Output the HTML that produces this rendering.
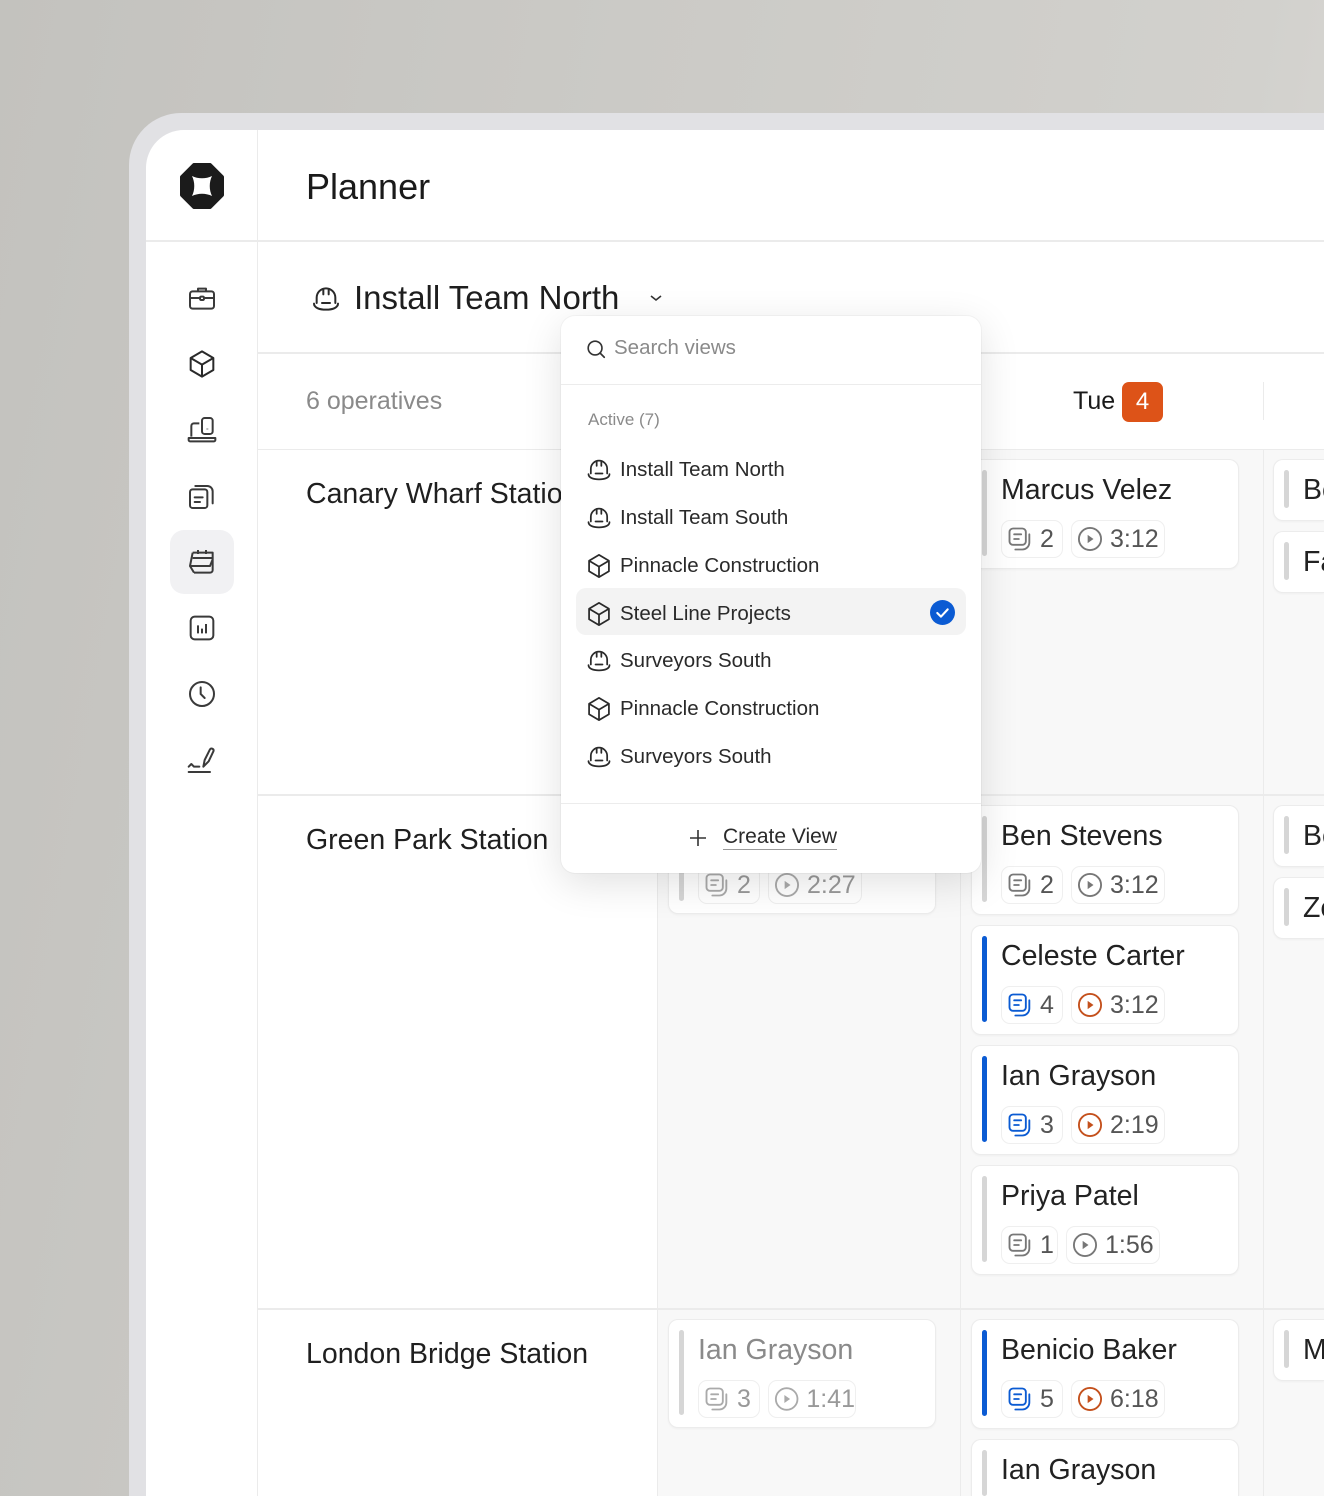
<!DOCTYPE html>
<html><head><meta charset="utf-8">
<style>
*{box-sizing:border-box;margin:0;padding:0}
html,body{width:1324px;height:1496px;overflow:hidden}
body{position:relative;font-family:"Liberation Sans",sans-serif;
background:linear-gradient(100deg,#c3c2be 0%,#cbcac6 40%,#d2d1cd 80%,#dcdbd8 100%);}
#wrap{position:absolute;left:0;top:0;width:1324px;height:1496px;overflow:hidden}
.abs{position:absolute}
.frame{left:129px;top:113px;width:1195px;height:1383px;background:#e1e1e4;border-radius:52px 0 0 0}
.inner{left:146px;top:130px;width:1178px;height:1366px;background:#fff;border-radius:38px 0 0 0;overflow:hidden}
.grid{background:#f8f8f8}
.line{background:#ebebeb}
.t{position:absolute;white-space:nowrap;color:#1f1f1f}
.card{position:absolute;background:#fff;border:1px solid #ececec;border-radius:10px;box-shadow:0 1px 2px rgba(0,0,0,.04)}
.card .bar{position:absolute;left:10px;top:10px;bottom:12px;width:5px;border-radius:3px;background:#d6d6d6}
.card .bar.b{background:#0b5bd3}
.card .nm{position:absolute;left:29px;top:14px;font-size:28.5px;color:#222;white-space:nowrap}
.card.f .nm{color:#8a8a8a}
.chip{position:absolute;top:60px;height:38px;border:1px solid #efefef;border-radius:9px;background:#fff;font-size:25px;color:#555;display:flex;align-items:center;padding-left:4px}
.card.f .chip{color:#999}
.chip svg{margin-right:6px}
.dd{left:561px;top:316px;width:420px;height:557px;background:#fff;border-radius:14px;box-shadow:0 10px 40px rgba(0,0,0,.12),0 0 0 1px rgba(0,0,0,.03)}
.it{position:absolute;left:24px;font-size:20.5px;color:#2a2a2a;display:flex;align-items:center;white-space:nowrap}
.it svg{margin-right:7px}
</style></head><body>
<svg width="0" height="0" style="position:absolute">
<defs>
<symbol id="doc" viewBox="0 0 24 24" fill="none" stroke-width="1.6" stroke-linecap="round" stroke-linejoin="round"><rect x="3" y="3" width="14" height="14" rx="3"/><path d="M7 8h6M7 12h4"/><path d="M20 8v7a6 6 0 0 1-6 6H8"/></symbol>
<symbol id="play" viewBox="0 0 24 24" fill="none" stroke-width="1.6"><circle cx="12" cy="12" r="9.5"/><path d="M10 8.5l5 3.5-5 3.5z" fill="currentColor" stroke="none"/></symbol>
<symbol id="helm" viewBox="0 0 24 24" fill="none" stroke="#2a2a2a" stroke-width="1.5" stroke-linecap="round" stroke-linejoin="round"><path d="M5 15V11a7 7 0 0 1 14 0v4"/><path d="M10 4.5v4M14 4.5v4"/><path d="M3 15.5c0 3 4 4.5 9 4.5s9-1.5 9-4.5"/><path d="M9 15h6"/></symbol>
<symbol id="cube" viewBox="0 0 24 24" fill="none" stroke="#2a2a2a" stroke-width="1.5" stroke-linejoin="round"><path d="M12 2.5l8.5 5v9L12 21.5 3.5 16.5v-9z"/><path d="M3.5 7.5L12 12.5l8.5-5M12 12.5v9"/></symbol>
</defs></svg>
<div id="wrap">
<div class="abs frame"></div>
<div class="abs inner">
  <div class="abs grid" style="left:511px;top:319px;width:667px;height:1047px"></div>
  <div class="abs line" style="left:111px;top:0;width:1px;height:1366px"></div>
  <div class="abs line" style="left:0;top:110px;width:1178px;height:2px"></div>
  <div class="abs line" style="left:112px;top:222px;width:1066px;height:2px"></div>
  <div class="abs" style="left:112px;top:224px;width:1066px;height:95px;background:#fff"></div>
  <div class="abs line" style="left:112px;top:319px;width:1066px;height:1px"></div>
  <div class="abs line" style="left:112px;top:664px;width:1066px;height:2px"></div>
  <div class="abs line" style="left:112px;top:1178px;width:1066px;height:2px"></div>
  <div class="abs line" style="left:511px;top:319px;width:1px;height:1047px"></div>
  <div class="abs line" style="left:814px;top:319px;width:1px;height:1047px"></div>
  <div class="abs line" style="left:1117px;top:319px;width:1px;height:1047px"></div>
  <div class="abs line" style="left:1117px;top:252px;width:1px;height:38px"></div>
</div>

<svg class="abs" style="left:179px;top:163px" width="46" height="46" viewBox="0 0 46 46">
<path d="M15 2h16l12 12v18L31 44H15L3 32V14z" fill="#1b1b1b" stroke="#1b1b1b" stroke-width="4" stroke-linejoin="round"/>
<path d="M13 13c6 3 14 3 20 0c-3 6-3 14 0 20c-6-3-14-3-20 0c3-6 3-14 0-20z" fill="#fff"/>
</svg>

<div class="abs" style="left:170px;top:530px;width:64px;height:64px;background:#f1f1f3;border-radius:14px"></div>
<svg class="abs" style="left:186px;top:282px" width="32" height="32" viewBox="0 0 24 24" fill="none" stroke="#3a3a3a" stroke-width="1.5" stroke-linejoin="round"><rect x="3" y="7" width="18" height="13" rx="2"/><path d="M9 7V5h6v2M3 12h18"/><rect x="10.5" y="11" width="3" height="2.5" rx=".8" fill="#fff"/></svg>
<svg class="abs" style="left:186px;top:348px" width="32" height="32" viewBox="0 0 24 24"><use href="#cube" stroke="#3a3a3a"/></svg>
<svg class="abs" style="left:186px;top:414px" width="32" height="32" viewBox="0 0 24 24" fill="none" stroke="#3a3a3a" stroke-width="1.5" stroke-linejoin="round"><path d="M4 17V9a2 2 0 0 1 2-2h4"/><rect x="12" y="3" width="8" height="12" rx="2"/><path d="M16 11v.5"/><path d="M2 18h20v1.5a1 1 0 0 1-1 1H3a1 1 0 0 1-1-1z"/></svg>
<svg class="abs" style="left:186px;top:480px" width="32" height="32" viewBox="0 0 24 24" fill="none" stroke="#3a3a3a" stroke-width="1.5" stroke-linecap="round" stroke-linejoin="round"><rect x="3" y="7" width="13" height="14" rx="2"/><path d="M6.5 13h6M6.5 16.5h4"/><path d="M7 4.5h9a4 4 0 0 1 4 4v9"/></svg>
<svg class="abs" style="left:185px;top:546px" width="34" height="32" viewBox="0 0 24 24" fill="none" stroke="#3a3a3a" stroke-width="1.5" stroke-linejoin="round"><path d="M5 5h15v13a2 2 0 0 1-2 2H6"/><path d="M5 5L3 15h15l2-5"/><path d="M3 15l3 5M9 3v3M15 3v3M5 9h15"/></svg>
<svg class="abs" style="left:186px;top:612px" width="32" height="32" viewBox="0 0 24 24" fill="none" stroke="#3a3a3a" stroke-width="1.5"><rect x="3.5" y="3.5" width="17" height="17" rx="3"/><path d="M9 10v6M12 12.5v3.5M15 9v7"/></svg>
<svg class="abs" style="left:186px;top:678px" width="32" height="32" viewBox="0 0 24 24" fill="none" stroke="#3a3a3a" stroke-width="1.5" stroke-linecap="round"><circle cx="12" cy="12" r="9"/><path d="M11 7v5l3 3"/></svg>
<svg class="abs" style="left:186px;top:744px" width="32" height="32" viewBox="0 0 24 24" fill="none" stroke="#3a3a3a" stroke-width="1.5" stroke-linecap="round" stroke-linejoin="round"><path d="M2 21h16"/><path d="M2 17l2-2 2 2h4"/><path d="M13 17l1-5 4-8a1.5 1.5 0 0 1 2.6 1.4L17 13z"/></svg>

<div class="t" style="left:306px;top:166px;font-size:36px;color:#1a1a1a">Planner</div>
<svg class="abs" style="left:310px;top:283px" width="32" height="32" viewBox="0 0 24 24"><use href="#helm"/></svg>
<div class="t" style="left:354px;top:279px;font-size:33px;color:#1e1e1e">Install Team North</div>
<svg class="abs" style="left:648px;top:290px" width="16" height="16" viewBox="0 0 16 16" fill="none" stroke="#333" stroke-width="1.6"><path d="M3 6l5 4 5-4"/></svg>
<div class="t" style="left:306px;top:387px;font-size:25px;color:#8a8a8a">6 operatives</div>
<div class="t" style="left:1073px;top:387px;font-size:25px;color:#1a1a1a">Tue</div>
<div class="abs" style="left:1122px;top:382px;width:41px;height:40px;background:#dd5318;border-radius:7px;color:#fff;font-size:24px;text-align:center;line-height:40px">4</div>

<div class="t" style="left:306px;top:478px;font-size:28.5px">Canary Wharf Station</div>
<div class="t" style="left:306px;top:824px;font-size:28.5px">Green Park Station</div>
<div class="t" style="left:306px;top:1338px;font-size:28.5px">London Bridge Station</div>

<div class="card f" style="left:668px;top:805px;width:268px;height:109px"><div class="bar"></div>
 <div class="chip" style="left:29px;width:62px"><svg width="28" height="28" style="color:#aaa;stroke:#aaa"><use href="#doc"/></svg>2</div>
 <div class="chip" style="left:99px;width:94px"><svg width="28" height="28" style="color:#aaa;stroke:#aaa"><use href="#play"/></svg>2:27</div></div>
<div class="card f" style="left:668px;top:1319px;width:268px;height:109px"><div class="bar"></div><div class="nm">Ian Grayson</div>
 <div class="chip" style="left:29px;width:62px"><svg width="28" height="28" style="color:#aaa;stroke:#aaa"><use href="#doc"/></svg>3</div>
 <div class="chip" style="left:99px;width:88px"><svg width="28" height="28" style="color:#aaa;stroke:#aaa"><use href="#play"/></svg>1:41</div></div>

<div class="card" style="left:971px;top:459px;width:268px;height:110px"><div class="bar"></div><div class="nm">Marcus Velez</div>
 <div class="chip" style="left:29px;width:62px"><svg width="28" height="28" style="color:#777;stroke:#777"><use href="#doc"/></svg>2</div>
 <div class="chip" style="left:99px;width:94px"><svg width="28" height="28" style="color:#777;stroke:#777"><use href="#play"/></svg>3:12</div></div>
<div class="card" style="left:971px;top:805px;width:268px;height:110px"><div class="bar"></div><div class="nm">Ben Stevens</div>
 <div class="chip" style="left:29px;width:62px"><svg width="28" height="28" style="color:#777;stroke:#777"><use href="#doc"/></svg>2</div>
 <div class="chip" style="left:99px;width:94px"><svg width="28" height="28" style="color:#777;stroke:#777"><use href="#play"/></svg>3:12</div></div>
<div class="card" style="left:971px;top:925px;width:268px;height:110px"><div class="bar b"></div><div class="nm">Celeste Carter</div>
 <div class="chip" style="left:29px;width:62px"><svg width="28" height="28" style="color:#0b5bd3;stroke:#0b5bd3"><use href="#doc"/></svg>4</div>
 <div class="chip" style="left:99px;width:94px"><svg width="28" height="28" style="color:#c4501c;stroke:#c4501c"><use href="#play"/></svg>3:12</div></div>
<div class="card" style="left:971px;top:1045px;width:268px;height:110px"><div class="bar b"></div><div class="nm">Ian Grayson</div>
 <div class="chip" style="left:29px;width:62px"><svg width="28" height="28" style="color:#0b5bd3;stroke:#0b5bd3"><use href="#doc"/></svg>3</div>
 <div class="chip" style="left:99px;width:94px"><svg width="28" height="28" style="color:#c4501c;stroke:#c4501c"><use href="#play"/></svg>2:19</div></div>
<div class="card" style="left:971px;top:1165px;width:268px;height:110px"><div class="bar"></div><div class="nm">Priya Patel</div>
 <div class="chip" style="left:29px;width:57px"><svg width="28" height="28" style="color:#777;stroke:#777"><use href="#doc"/></svg>1</div>
 <div class="chip" style="left:94px;width:94px"><svg width="28" height="28" style="color:#777;stroke:#777"><use href="#play"/></svg>1:56</div></div>
<div class="card" style="left:971px;top:1319px;width:268px;height:110px"><div class="bar b"></div><div class="nm">Benicio Baker</div>
 <div class="chip" style="left:29px;width:62px"><svg width="28" height="28" style="color:#0b5bd3;stroke:#0b5bd3"><use href="#doc"/></svg>5</div>
 <div class="chip" style="left:99px;width:94px"><svg width="28" height="28" style="color:#c4501c;stroke:#c4501c"><use href="#play"/></svg>6:18</div></div>
<div class="card" style="left:971px;top:1439px;width:268px;height:57px;border-bottom:none;border-radius:10px 10px 0 0"><div class="bar" style="bottom:0"></div><div class="nm">Ian Grayson</div></div>

<div class="card" style="left:1273px;top:459px;width:51px;height:62px;border-right:none;border-radius:10px 0 0 10px"><div class="bar"></div><div class="nm" style="top:14px">Be</div></div>
<div class="card" style="left:1273px;top:531px;width:51px;height:62px;border-right:none;border-radius:10px 0 0 10px"><div class="bar"></div><div class="nm" style="top:14px">Fa</div></div>
<div class="card" style="left:1273px;top:805px;width:51px;height:62px;border-right:none;border-radius:10px 0 0 10px"><div class="bar"></div><div class="nm" style="top:14px">Be</div></div>
<div class="card" style="left:1273px;top:877px;width:51px;height:62px;border-right:none;border-radius:10px 0 0 10px"><div class="bar"></div><div class="nm" style="top:14px">Ze</div></div>
<div class="card" style="left:1273px;top:1319px;width:51px;height:62px;border-right:none;border-radius:10px 0 0 10px"><div class="bar"></div><div class="nm" style="top:14px">M</div></div>

<div class="abs dd">
  <svg class="abs" style="left:24px;top:22px" width="22" height="22" viewBox="0 0 24 24" fill="none" stroke="#333" stroke-width="1.8" stroke-linecap="round"><circle cx="11" cy="11" r="7.5"/><path d="M16.5 16.5L21 21"/></svg>
  <div class="t" style="left:53px;top:20px;font-size:20.5px;color:#8a8a8a">Search views</div>
  <div class="abs" style="left:0;top:68px;width:420px;height:1px;background:#ececec"></div>
  <div class="t" style="left:27px;top:94px;font-size:17px;color:#8a8a8a">Active (7)</div>
  <div class="abs" style="left:15px;top:272px;width:390px;height:47px;background:#f3f3f3;border-radius:10px"></div>
  <div class="it" style="top:140px"><svg width="28" height="28" viewBox="0 0 24 24"><use href="#helm"/></svg>Install Team North</div>
  <div class="it" style="top:188px"><svg width="28" height="28" viewBox="0 0 24 24"><use href="#helm"/></svg>Install Team South</div>
  <div class="it" style="top:236px"><svg width="28" height="28" viewBox="0 0 24 24"><use href="#cube"/></svg>Pinnacle Construction</div>
  <div class="it" style="top:284px"><svg width="28" height="28" viewBox="0 0 24 24"><use href="#cube"/></svg>Steel Line Projects</div>
  <svg class="abs" style="left:369px;top:284px" width="25" height="25" viewBox="0 0 24 24"><circle cx="12" cy="12" r="12" fill="#0b5bd3"/><path d="M7 12.5l3.5 3.5L17 9" fill="none" stroke="#fff" stroke-width="2" stroke-linecap="round" stroke-linejoin="round"/></svg>
  <div class="it" style="top:331px"><svg width="28" height="28" viewBox="0 0 24 24"><use href="#helm"/></svg>Surveyors South</div>
  <div class="it" style="top:379px"><svg width="28" height="28" viewBox="0 0 24 24"><use href="#cube"/></svg>Pinnacle Construction</div>
  <div class="it" style="top:427px"><svg width="28" height="28" viewBox="0 0 24 24"><use href="#helm"/></svg>Surveyors South</div>
  <div class="abs" style="left:0;top:487px;width:420px;height:1px;background:#ececec"></div>
  <svg class="abs" style="left:127px;top:512px" width="20" height="20" viewBox="0 0 20 20" stroke="#333" stroke-width="1.6"><path d="M10 2v16M2 10h16"/></svg>
  <div class="t" style="left:162px;top:509px;font-size:21px;color:#2a2a2a;border-bottom:1px solid #999;line-height:24px">Create View</div>
</div>
</div>
</body></html>
